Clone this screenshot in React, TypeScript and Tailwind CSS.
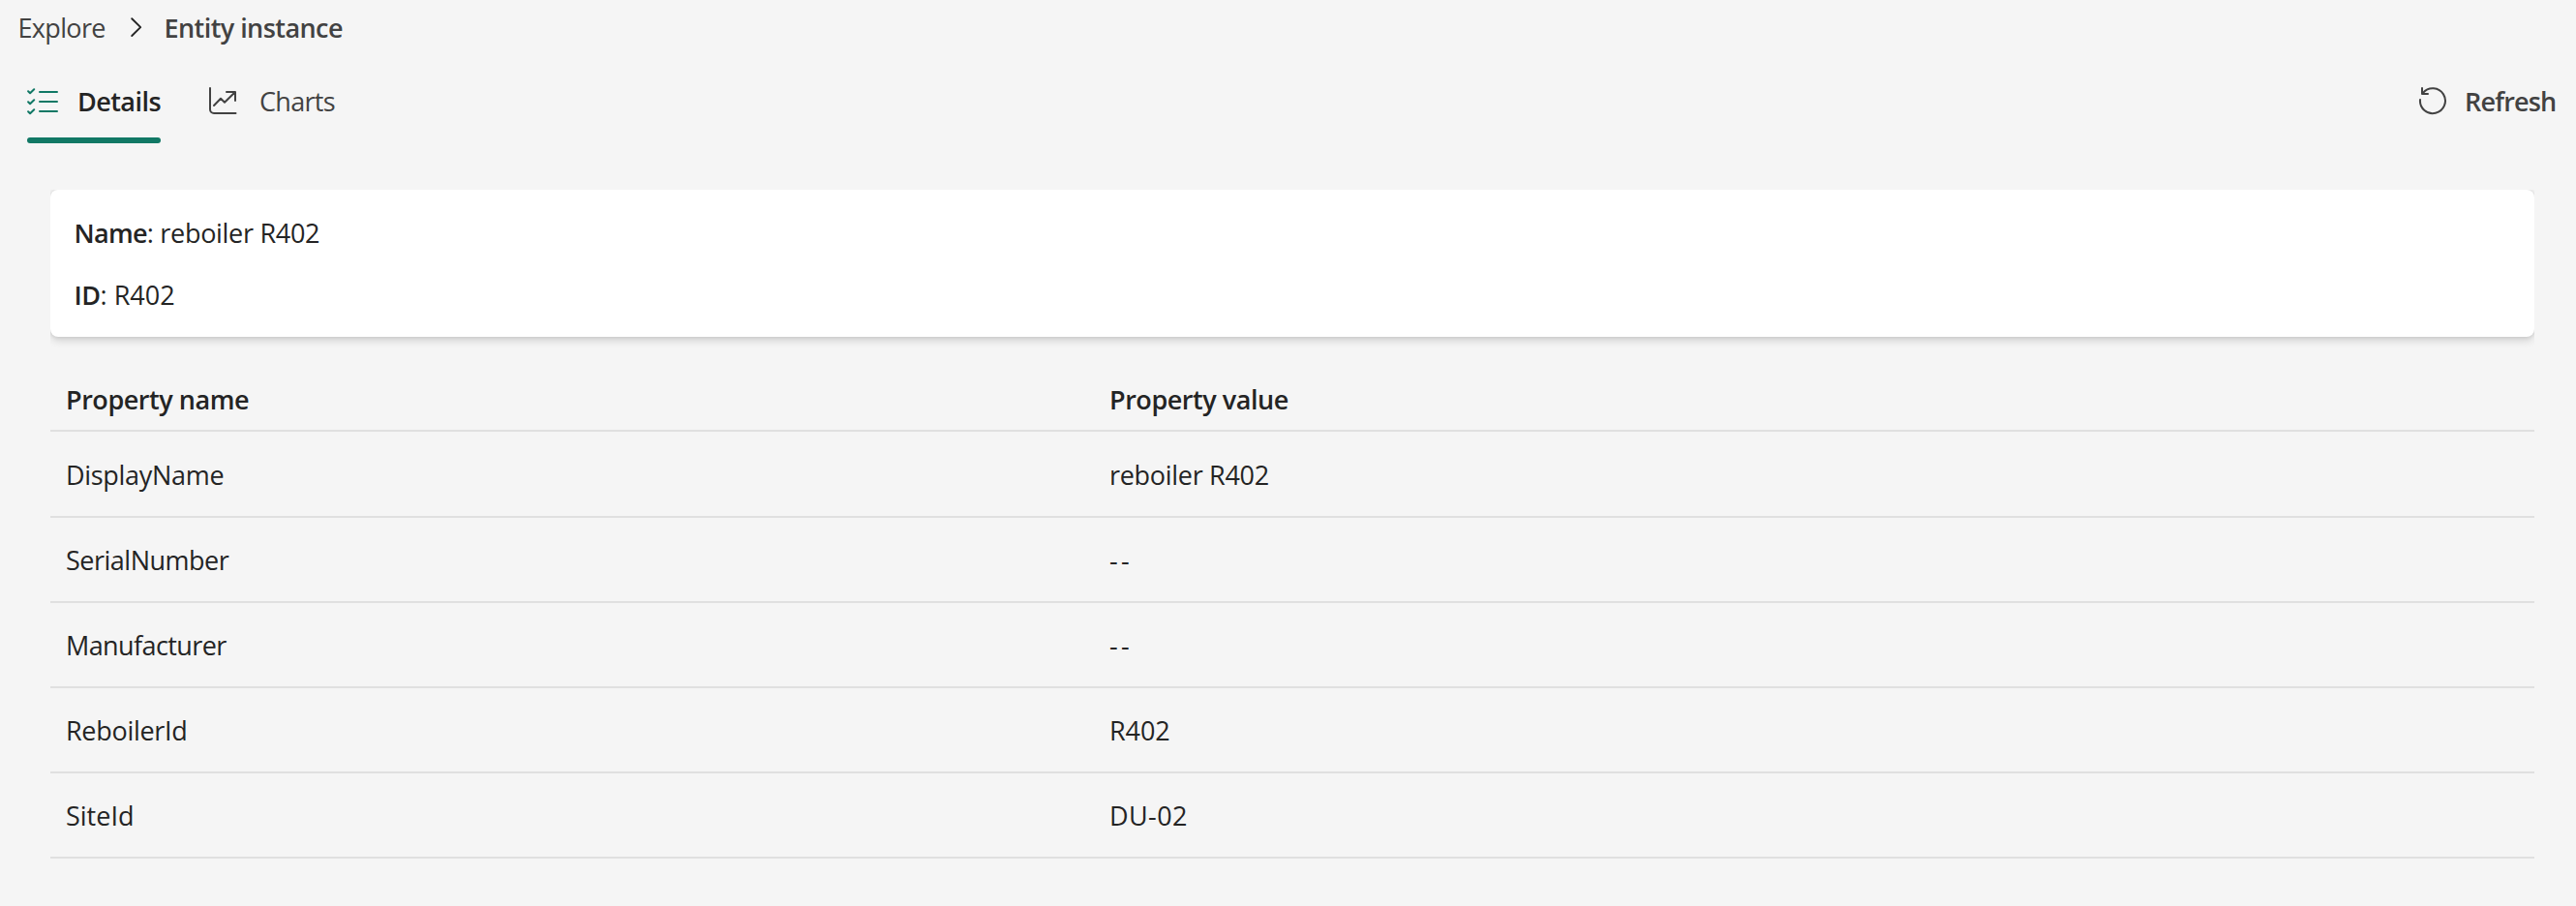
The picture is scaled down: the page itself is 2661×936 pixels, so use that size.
type Property = { name: string; value: string; nameTracking: string; valueTracking: string };

const properties: Property[] = [
  { name: 'DisplayName', value: 'reboiler R402', nameTracking: 'tracking-[-0.3px]', valueTracking: 'tracking-[-0.3px]' },
  { name: 'SerialNumber', value: '--', nameTracking: 'tracking-[-0.5px]', valueTracking: 'tracking-[3.4px]' },
  { name: 'Manufacturer', value: '--', nameTracking: 'tracking-[-0.6px]', valueTracking: 'tracking-[3.4px]' },
  { name: 'ReboilerId', value: 'R402', nameTracking: 'tracking-[-0.3px]', valueTracking: 'tracking-[-0.1px]' },
  { name: 'SiteId', value: 'DU-02', nameTracking: 'tracking-normal', valueTracking: 'tracking-[0.4px]' },
];

function ChevronIcon() {
  return (
    <svg className="ml-[21px] h-10 w-5 shrink-0" viewBox="0 0 20 40" fill="none" stroke="#242424" strokeWidth="1.9" strokeLinecap="round" strokeLinejoin="round">
      <path d="M6.2 10.2l9 8.9-9 8.9" />
    </svg>
  );
}

function ChecklistIcon() {
  return (
    <svg className="h-10 w-8 shrink-0" viewBox="0 0 32 40" fill="none" stroke="#117865" strokeWidth="2" strokeLinecap="round" strokeLinejoin="round">
      <path d="M1.1 9.2l2 2 4.1-4M1.1 20.2l2 2 4.1-4M1.1 30.2l2 2 4.1-4" />
      <path d="M13 10h18M13 20h18M13 30h18" />
    </svg>
  );
}

function ChartIcon() {
  return (
    <svg className="h-10 w-[30px] shrink-0" viewBox="0 0 30 40" fill="none" stroke="#424242" strokeWidth="2" strokeLinecap="round" strokeLinejoin="round">
      <path d="M2 6v22a4 4 0 0 0 4 4h22.5" />
      <path d="M6 24l7-7.2 4 4L28 10M19 10h9v9" />
    </svg>
  );
}

function RefreshIcon() {
  return (
    <svg className="h-10 w-[30px] shrink-0" viewBox="0 0 30 40" fill="none" stroke="#424242" strokeWidth="2" strokeLinecap="round" strokeLinejoin="round">
      <path d="M2 18a13 13 0 1 0 3-7.2" />
      <path d="M4 6v6h6" />
    </svg>
  );
}

export default function App() {
  return (
    <div className="min-h-[936px] w-full bg-[#f5f5f5] font-['Open_Sans',sans-serif] text-[27px] leading-[40px] whitespace-nowrap text-[#242424]">
      <nav className="flex h-[85px] items-start pt-[9px] text-[#424242]">
        <span className="ml-[18.5px] w-[90px] tracking-[-0.65px]">Explore</span>
        <ChevronIcon />
        <span className="ml-[20px] font-semibold tracking-[-0.56px]">Entity instance</span>
      </nav>

      <div className="flex h-[111px] items-start justify-between pr-[20px] pl-7">
        <div className="flex">
          <div className="flex w-[138px] flex-col">
            <div className="flex">
              <ChecklistIcon />
              <span className="ml-[20px] font-semibold tracking-[-0.56px]">Details</span>
            </div>
            <div className="mt-[17px] h-[6px] rounded-full bg-[#117865]" />
          </div>
          <div className="ml-[49px] flex text-[#424242]">
            <ChartIcon />
            <span className="ml-[23px] tracking-[-0.7px]">Charts</span>
          </div>
        </div>
        <div className="flex text-[#424242]">
          <RefreshIcon />
          <span className="ml-[18px] w-[95px] font-semibold tracking-[-0.8px]">Refresh</span>
        </div>
      </div>

      <main className="ml-[52px] w-[2566px]">
        <section className="flex h-[152px] flex-col gap-6 rounded-lg bg-white pt-[25px] pl-[24.5px] shadow-[0_0_4px_rgba(0,0,0,0.12),0_4px_8px_rgba(0,0,0,0.14)] [clip-path:inset(0_0_-16px_0)]">
          <div>
            <span className="font-semibold tracking-[-0.7px]">Name</span>
            <span className="tracking-[-0.3px]">: reboiler R402</span>
          </div>
          <div>
            <span className="font-semibold tracking-[-0.5px]">ID</span>
            <span className="tracking-[0px]">: R402</span>
          </div>
        </section>

        <div className="mt-[26px]">
          <div className="flex h-[72px] border-b-2 border-[#e0e0e0] pt-[19px] pl-4 font-semibold tracking-[-0.45px]">
            <span className="w-[1078px]">Property name</span>
            <span>Property value</span>
          </div>
          {properties.map((p, i) => (
            <div key={p.name} className={`flex border-b-2 border-[#e0e0e0] pl-4 ${i === 0 ? 'h-[89px] pt-[25px]' : 'h-[88px] pt-[24px]'}`}>
              <span className={`w-[1078px] ${p.nameTracking}`}>{p.name}</span>
              <span className={p.valueTracking}>{p.value}</span>
            </div>
          ))}
        </div>
      </main>
    </div>
  );
}
